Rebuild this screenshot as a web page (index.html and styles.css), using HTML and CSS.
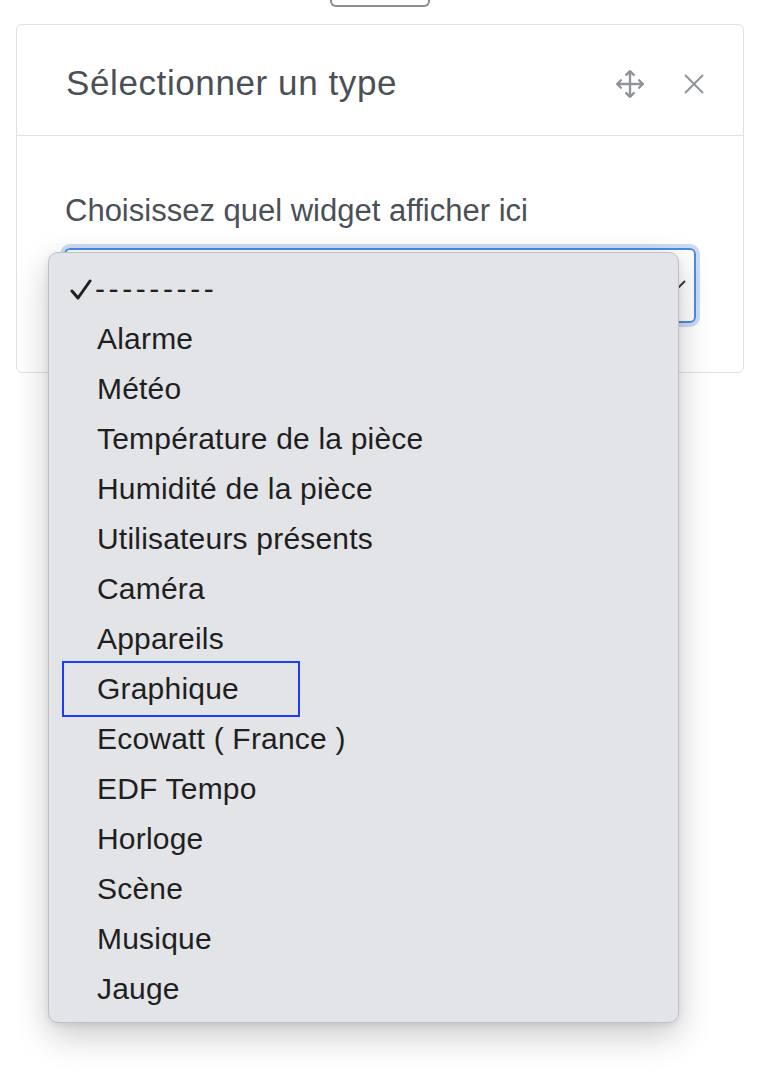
FILE: index.html
```html
<!DOCTYPE html>
<html lang="fr">
<head>
<meta charset="utf-8">
<title>Sélectionner un type</title>
<link rel="stylesheet" href="styles.css">
</head>
<body>
<div class="topbox"></div>
<div class="card">
  <div class="card-header">
    <h5 class="title">Sélectionner un type</h5>
    <div class="tools">
      <svg class="move" viewBox="0 0 28 28" width="30" height="30">
        <path d="M14 2 V26 M2 14 H26 M10.5 5.5 L14 2 L17.5 5.5 M10.5 22.5 L14 26 L17.5 22.5 M5.5 10.5 L2 14 L5.5 17.5 M22.5 10.5 L26 14 L22.5 17.5" fill="none" stroke="#8f949c" stroke-width="2.2" stroke-linecap="round" stroke-linejoin="round"/>
      </svg>
      <svg class="close" viewBox="0 0 22 22" width="22" height="22">
        <path d="M2 2 L20 20 M20 2 L2 20" fill="none" stroke="#8f949c" stroke-width="2"/>
      </svg>
    </div>
  </div>
  <div class="card-body">
    <div class="label">Choisissez quel widget afficher ici</div>
    <div class="select">
      <svg class="chev" viewBox="0 0 18 10" width="18" height="10">
        <path d="M1 1 L9 9 L17 1" fill="none" stroke="#3a3f45" stroke-width="2"/>
      </svg>
    </div>
  </div>
</div>
<ul class="menu">
  <li class="opt checked">
    <svg class="check" viewBox="0 0 22 22" width="22" height="22">
      <path d="M2 12 L8 19 L20 2" fill="none" stroke="#1f1f21" stroke-width="3" stroke-linecap="round" stroke-linejoin="round"/>
    </svg>
    <span class="dashes">---------</span>
  </li>
  <li class="opt">Alarme</li>
  <li class="opt">Météo</li>
  <li class="opt">Température de la pièce</li>
  <li class="opt">Humidité de la pièce</li>
  <li class="opt">Utilisateurs présents</li>
  <li class="opt">Caméra</li>
  <li class="opt">Appareils</li>
  <li class="opt focus">Graphique</li>
  <li class="opt">Ecowatt ( France )</li>
  <li class="opt">EDF Tempo</li>
  <li class="opt">Horloge</li>
  <li class="opt">Scène</li>
  <li class="opt">Musique</li>
  <li class="opt">Jauge</li>
</ul>
</body>
</html>
```
FILE: styles.css
```css
html, body {
  margin: 0;
  padding: 0;
  background: #ffffff;
}
body {
  position: relative;
  width: 762px;
  height: 1088px;
  overflow: hidden;
  font-family: "Liberation Sans", Arial, sans-serif;
}
.topbox {
  width: 96px;
  height: 5px;
  margin-left: 330px;
  border: 2px solid #8a8d96;
  border-top: none;
  border-radius: 0 0 6px 6px;
}
.card {
  margin: 17px 18px 0 16px;
  border: 1.5px solid #dfe3e8;
  border-radius: 6px;
  background: #fff;
}
.card-header {
  height: 110px;
  display: flex;
  align-items: center;
  justify-content: space-between;
  padding: 0 38px 0 49px;
  border-bottom: 1.5px solid #dfe3e8;
}
.title {
  margin: 5px 0 0 0;
  font-size: 35px;
  font-weight: 400;
  color: #4b5057;
  letter-spacing: 0.6px;
}
.tools {
  display: flex;
  align-items: center;
  gap: 38px;
  margin-top: 7px;
}
.card-body {
  padding: 57px 47px 49px 47px;
}
.label {
  font-size: 31px;
  line-height: 36px;
  color: #4b5057;
  margin-left: 1px;
  margin-bottom: 19px;
}
.select {
  height: 71px;
  border: 2px solid #4a8be6;
  border-radius: 6px;
  box-shadow: 0 0 0 4px #cddcf3;
  display: flex;
  align-items: center;
  justify-content: flex-end;
  padding-right: 8px;
}
.chev {
  margin-top: -2px;
}
.menu {
  position: absolute;
  left: 48px;
  top: 252px;
  width: 629px;
  margin: 0;
  padding: 11px 0 8px 0;
  list-style: none;
  background: #e3e4e8;
  border: 1px solid #bfc0c5;
  border-radius: 10px;
  box-shadow: 0 12px 34px rgba(0, 0, 0, 0.22), 0 2px 6px rgba(0, 0, 0, 0.08);
}
.opt {
  position: relative;
  height: 50px;
  line-height: 50px;
  padding-left: 48px;
  font-size: 30px;
  letter-spacing: 0.2px;
  color: #1f1f21;
}
.check {
  position: absolute;
  left: 21px;
  top: 15px;
}
.dashes {
  letter-spacing: 3.6px;
  margin-left: -2px;
}
.focus::before {
  content: "";
  position: absolute;
  left: 13px;
  top: -3px;
  width: 234px;
  height: 52px;
  border: 2px solid #1d3cf5;
}
```
